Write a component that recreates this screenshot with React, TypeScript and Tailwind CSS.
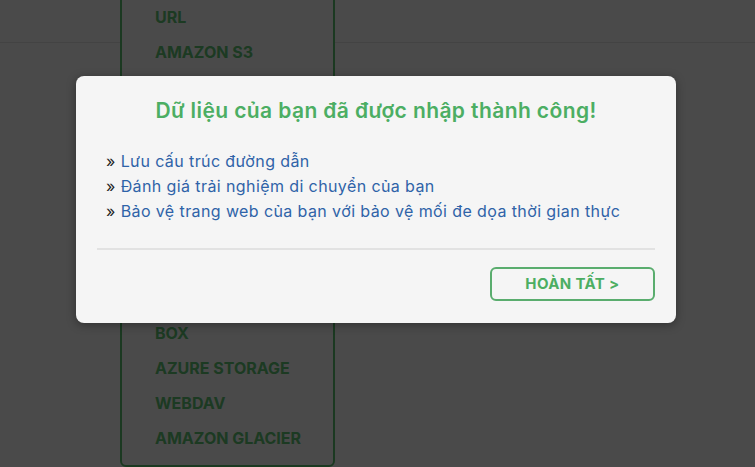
import React from 'react';

const sources = [
  'URL',
  'AMAZON S3',
  'DROPBOX',
  'GOOGLE DRIVE',
  'ONEDRIVE',
  'FTP',
  'SFTP',
  'GOOGLE CLOUD',
  'BACKBLAZE B2',
  'BOX',
  'AZURE STORAGE',
  'WEBDAV',
  'AMAZON GLACIER',
];

const benefits = [
  'Lưu cấu trúc đường dẫn',
  'Đánh giá trải nghiệm di chuyển của bạn',
  'Bảo vệ trang web của bạn với bảo vệ mối đe dọa thời gian thực',
];

export default function App() {
  return (
    <div className="relative h-[467px] w-full overflow-hidden bg-white font-['Inter','Noto_Sans',sans-serif]">
      {/* page header */}
      <div className="h-[43px] border-b border-[#e7e7e7]" />

      {/* open source dropdown */}
      <div className="absolute left-[120px] top-[-11px] w-[215px] rounded-md border-2 border-[#5fc573] bg-white pt-[8px] pb-[9px]">
        {sources.map((s) => (
          <div key={s} className="flex h-[35.15px] items-center pl-[33px] text-[16px] font-bold text-[#62c777]">
            {s}
          </div>
        ))}
      </div>

      {/* modal */}
      <div className="absolute inset-0 bg-black/[0.71] pt-[76px] pl-[76px]">
        <div className="w-[600px] rounded-lg bg-[#f5f5f5] px-[21px] pt-[20px] pb-[22px] shadow-[0_2px_10px_rgba(0,0,0,0.35)]">
          <h2 className="text-center text-[21px] leading-[30px] font-semibold tracking-[0.4px] text-[#4cae63]">
            Dữ liệu của bạn đã được nhập thành công!
          </h2>
          <ul className="mt-[23px] pl-[9px] text-[16px] leading-[25px] tracking-[0.4px]">
            {benefits.map((b) => (
              <li key={b} className="text-[#2f63a8]">
                <span className="text-[#222]">»</span> {b}
              </li>
            ))}
          </ul>
          <div className="mt-[24px] h-[2px] bg-[#e2e2e2]" />
          <div className="mt-[17px] flex justify-end">
            <button className="h-[34px] w-[165px] rounded-md border-2 border-[#5aad6e] text-[15px] font-bold tracking-wide text-[#4cae63]">
              HOÀN TẤT &gt;
            </button>
          </div>
        </div>
      </div>
    </div>
  );
}
